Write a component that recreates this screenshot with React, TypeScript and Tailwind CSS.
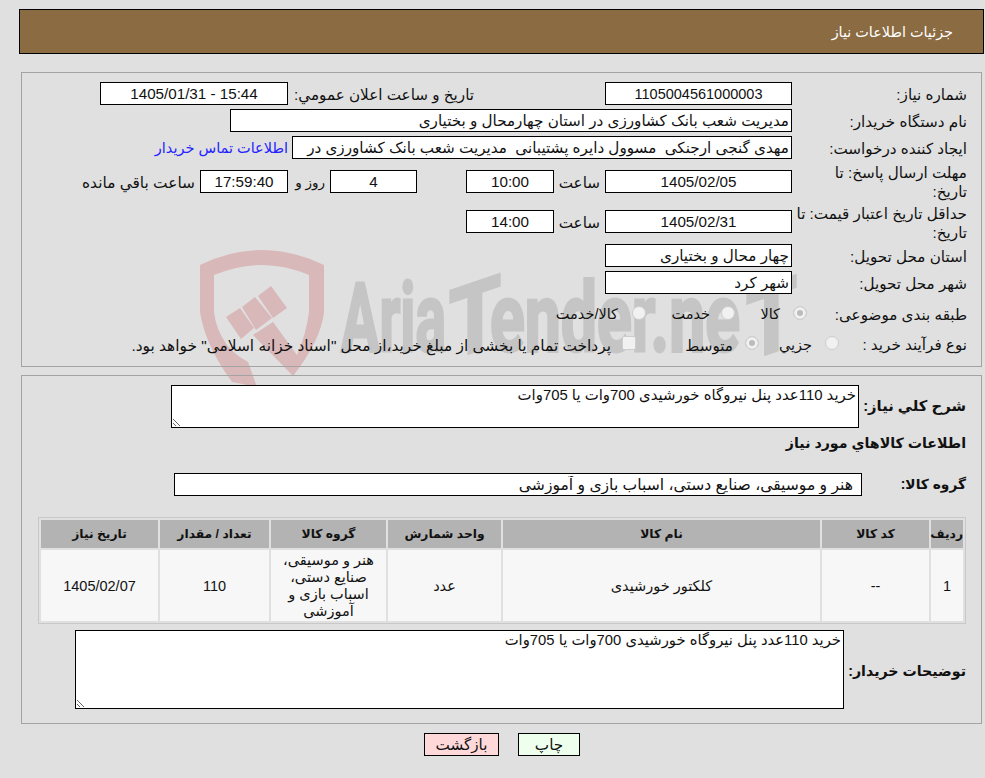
import type { ReactNode } from 'react';

const Box = ({ value, className = '' }: { value: string; className?: string }) => (
  <input
    readOnly
    value={value}
    className={`h-[23px] shrink-0 border border-black bg-white px-[2px] text-[#111] outline-none ${className}`}
  />
);

const Label = ({ children }: { children: ReactNode }) => (
  <div className="w-[175px] shrink-0 whitespace-nowrap pt-[2px]">{children}</div>
);

const Watermark = () => (
  <div dir="ltr" className="absolute left-0 top-0 pointer-events-none">
    <svg width="985" height="440" viewBox="0 0 985 440">
      <path
        fill="#d9b8b9"
        d="M200 265 Q262 235 324 265 L324 312 Q321 340 293 376 L253 335 L273 322 L297 355 Q306 335 309 312 L309 275 Q262 255 214 275 L214 312 Q216 330 227 345 Q235 355 248 362 L257 387 L232 382 Q205 345 200 312 Z"
      />
      <polygon fill="#d9b8b9" points="226,317 240,308 254,328 241,339" />
      <polygon fill="#d9b8b9" points="242,307 255,297 272,318 256,330" />
      <polygon fill="#d9b8b9" points="258,296 271,286 287,308 273,318" />
      <g fill="#c5c5c5" stroke="#c5c5c5" strokeWidth="3" fontSize="96" fontWeight="700" fontFamily="Roboto, sans-serif">
        <text x="341" y="351" textLength="105" lengthAdjust="spacingAndGlyphs">Aria</text>
        <text transform="translate(449 360) skewY(-19)" textLength="52" lengthAdjust="spacingAndGlyphs">T</text>
        <text x="490" y="351" textLength="250" lengthAdjust="spacingAndGlyphs">ender.ne</text>
        <text transform="translate(746 361) skewY(-19)" textLength="51" lengthAdjust="spacingAndGlyphs">T</text>
      </g>
    </svg>
  </div>
);

const Radio = ({ checked = false, className = '' }: { checked?: boolean; className?: string }) => (
  <input
    type="radio"
    disabled
    checked={checked}
    readOnly
    className={`m-0 h-[14px] w-[14px] shrink-0 appearance-none rounded-full border border-[#cdcdcd] bg-[#f1f1f1] checked:bg-[#bcbcbc] checked:shadow-[inset_0_0_0_3px_#f1f1f1] ${className}`}
  />
);

const columns = [32, 107, 317, 113, 115, 109, 117];
const headers = ['ردیف', 'کد کالا', 'نام کالا', 'واحد شمارش', 'گروه کالا', 'تعداد / مقدار', 'تاریخ نیاز'];
const cells = ['1', '--', 'کلکتور خورشیدی', 'عدد', 'هنر و موسیقی، صنایع دستی، اسباب بازی و آموزشی', '110', '1405/02/07'];

export default function App() {
  return (
    <div
      dir="rtl"
      className="relative min-h-[778px] overflow-hidden bg-[#e0e0e0] pt-[9px] pb-[22px] text-[15.2px] leading-[19px] text-[#111] font-['Liberation_Sans','DejaVu_Sans',sans-serif]"
    >
      <Watermark />
      <div className="relative z-10">
        <div className="ml-[19px] mr-px flex h-[45px] items-center border border-black bg-[#8b6b41] pr-[30px] pt-[2px] text-[14.4px] text-white">
          جزئیات اطلاعات نیاز
        </div>

        <div className="ml-[21px] mr-[3px] mt-[18px] flex h-[295px] flex-col gap-[4px] border border-[#a3a3a3] pr-[14px] pt-[9px]">
          <div className="flex items-center">
            <Label>شماره نیاز:</Label>
            <Box value="1105004561000003" className="w-[187px] text-center text-[14.5px]" />
            <div className="mr-[131px] w-[181px] whitespace-nowrap pt-[2px]">تاریخ و ساعت اعلان عمومي:</div>
            <Box value="15:44 - 1405/01/31" className="mr-[5px] w-[188px] text-center" />
          </div>
          <div className="flex items-center">
            <Label>نام دستگاه خریدار:</Label>
            <Box value="مدیریت شعب بانک کشاورزی در استان چهارمحال و بختیاری" className="w-[562px]" />
          </div>
          <div className="flex items-center">
            <Label>ایجاد کننده درخواست:</Label>
            <Box value="مهدی گنجی ارجنکی  مسوول دایره پشتیبانی  مدیریت شعب بانک کشاورزی در" className="w-[500px]" />
            <a href="#" className="mr-[4px] whitespace-nowrap pt-[2px] text-[14.5px] text-[#2323ff]">اطلاعات تماس خریدار</a>
          </div>
          <div className="flex h-[36px] items-center">
            <Label>
              مهلت ارسال پاسخ: تا
              <br />
              تاریخ:
            </Label>
            <Box value="1405/02/05" className="w-[187px] text-center" />
            <div className="w-[51px] pr-[5px] pt-[2px]">ساعت</div>
            <Box value="10:00" className="w-[88px] text-center" />
            <Box value="4" className="mr-[49px] w-[87px] text-center" />
            <div className="w-[42px] whitespace-nowrap pr-[5px] pt-[2px] text-[13.5px]">روز و</div>
            <Box value="17:59:40" className="w-[88px] bg-[#fffff0] text-center" />
            <div className="mr-[5px] whitespace-nowrap pt-[2px] text-[15.4px]">ساعت باقي مانده</div>
          </div>
          <div className="flex h-[37px] items-center">
            <Label>
              حداقل تاریخ اعتبار قیمت: تا
              <br />
              تاریخ:
            </Label>
            <Box value="1405/02/31" className="w-[187px] text-center" />
            <div className="w-[51px] pr-[5px] pt-[2px]">ساعت</div>
            <Box value="14:00" className="w-[88px] text-center" />
          </div>
          <div className="flex items-center">
            <Label>استان محل تحویل:</Label>
            <Box value="چهار محال و بختیاری" className="w-[187px]" />
          </div>
          <div className="flex items-center">
            <Label>شهر محل تحویل:</Label>
            <Box value="شهر کرد" className="w-[187px]" />
          </div>
          <div className="flex h-[30px] items-center">
            <div className="w-[160px] shrink-0 whitespace-nowrap pt-[2px]">طبقه بندی موضوعی:</div>
            <Radio checked />
            <span className="mr-[13px] w-[19px] whitespace-nowrap pt-[2px] text-[14.5px]">کالا</span>
            <Radio className="mr-[26px]" />
            <span className="mr-[11px] w-[39px] whitespace-nowrap pt-[2px] text-[14.5px]">خدمت</span>
            <Radio className="mr-[25px]" />
            <span className="mr-[14px] whitespace-nowrap pt-[2px] text-[14.5px]">کالا/خدمت</span>
          </div>
          <div className="flex h-[22px] items-center">
            <div className="w-[128px] shrink-0 whitespace-nowrap pt-[2px]">نوع فرآیند خرید :</div>
            <Radio />
            <span className="mr-[13px] w-[35px] whitespace-nowrap pt-[4px] text-[14.5px]">جزيي</span>
            <Radio checked className="mr-[18px]" />
            <span className="mr-[12px] w-[45px] whitespace-nowrap pt-[4px]">متوسط</span>
            <input
              type="checkbox"
              disabled
              readOnly
              className="m-0 mr-[52px] h-[14px] w-[14px] shrink-0 appearance-none rounded-[2px] border border-[#cdcdcd] bg-[#f1f1f1]"
            />
            <span className="mr-[11px] whitespace-nowrap pt-[4px] text-[15.4px]">
              پرداخت تمام یا بخشی از مبلغ خرید،از محل "اسناد خزانه اسلامی" خواهد بود.
            </span>
          </div>
        </div>

        <div className="ml-[21px] mr-[3px] mt-[8px] h-[349px] border border-[#a3a3a3] pr-[15px] pt-[9px]">
          <div className="flex items-center">
            <div className="w-[107px] shrink-0 whitespace-nowrap text-[14.8px] font-bold">شرح کلي نیاز:</div>
            <textarea
              readOnly
              rows={2}
              defaultValue="خرید 110عدد پنل نیروگاه خورشیدی 700وات یا 705وات"
              className="block h-[43px] w-[688px] border border-black bg-white px-[2px] text-[14.9px] outline-none"
            />
          </div>
          <div className="h-[30px] text-[14.2px] font-bold leading-[30px]">اطلاعات کالاهاي مورد نیاز</div>
          <div className="mt-[15px] flex items-center">
            <div className="w-[104px] shrink-0 whitespace-nowrap text-[13.8px] font-bold">گروه کالا:</div>
            <Box value="هنر و موسیقی، صنایع دستی، اسباب بازی و آموزشی" className="w-[688px] pr-[8px] text-[15.6px]" />
          </div>
          <table className="mt-[21px] w-[928px] table-fixed border-separate border-spacing-[2px] border border-[#c8c8c8] text-center text-[14.5px]">
            <colgroup>
              {columns.map((w, i) => (
                <col key={i} style={{ width: w }} />
              ))}
            </colgroup>
            <thead>
              <tr>
                {headers.map((h) => (
                  <th key={h} className="h-[28px] whitespace-nowrap bg-[#b3b3b3] p-0 text-[12.3px] font-bold">
                    {h}
                  </th>
                ))}
              </tr>
            </thead>
            <tbody>
              <tr>
                {cells.map((c) => (
                  <td key={c} className="h-[71px] bg-[#f7f7f7] px-[4px] pb-0 pt-[1px] leading-[17px]">
                    {c}
                  </td>
                ))}
              </tr>
            </tbody>
          </table>
          <div className="mt-[6px] flex items-center">
            <div className="w-[122px] shrink-0 whitespace-nowrap pt-[3px] text-[14.2px] font-bold">توضیحات خریدار:</div>
            <textarea
              readOnly
              defaultValue="خرید 110عدد پنل نیروگاه خورشیدی 700وات یا 705وات"
              className="block h-[79px] w-[769px] border border-black bg-white px-[2px] text-[14.8px] outline-none"
            />
          </div>
        </div>

        <div className="mt-[9px] flex gap-[19px] pr-[405px]">
          <button className="h-[23px] w-[62px] border border-black bg-[#eeffee]">چاپ</button>
          <button className="h-[23px] w-[75px] border border-black bg-[#ffd9d9]">بازگشت</button>
        </div>
      </div>
    </div>
  );
}
